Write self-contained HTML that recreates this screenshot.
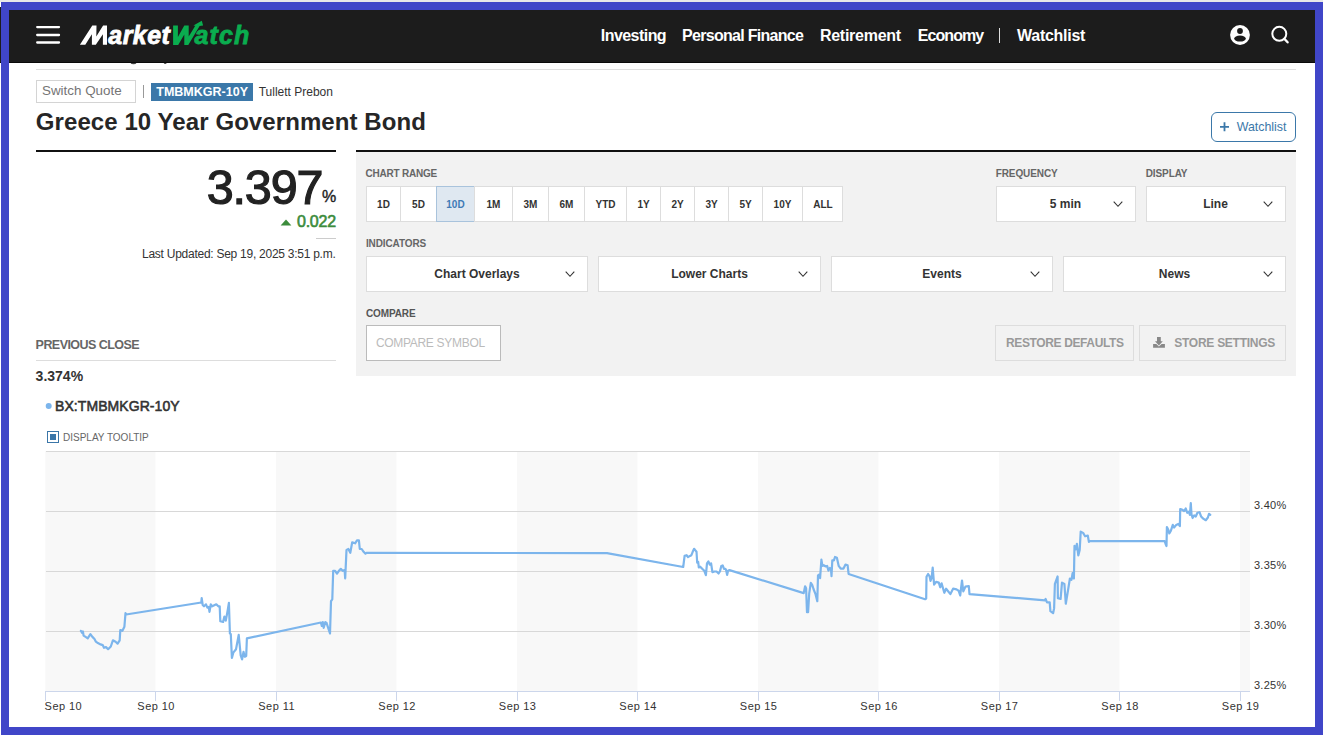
<!DOCTYPE html>
<html><head><meta charset="utf-8"><style>
html,body{margin:0;padding:0;}
body{width:1323px;height:737px;position:relative;overflow:hidden;background:#fff;font-family:"Liberation Sans", sans-serif;}
.t{position:absolute;white-space:nowrap;}
.r{position:absolute;}
</style></head><body>
<div class="r" style="left:0px;top:0px;width:1323px;height:2px;background:#e8e8e8"></div>
<div class="r" style="left:0px;top:7px;width:1323px;height:55px;background:#1c1c1c"></div>
<div class="r" style="left:0px;top:62px;width:1323px;height:1px;background:#0a0a0a"></div>
<svg class="r" style="left:30px;top:20px" width="36" height="30" viewBox="30 20 36 30"><g stroke="#fff" stroke-width="2.3" stroke-linecap="round"><line x1="37.2" y1="27.1" x2="59" y2="27.1"/><line x1="37.2" y1="35" x2="59" y2="35"/><line x1="37.2" y1="42.5" x2="59" y2="42.5"/></g></svg>
<svg class="r" style="left:76px;top:20px" width="36" height="30" viewBox="76 20 36 30"><path d="M79.9 44.7 L92.3 25.4 L96.5 25.4 L96.3 36.6 L103.1 25.4 L107 25.4 L107 44.7 L102.9 44.7 L102.9 34.2 L95.8 44.7 L91.9 44.7 L91.9 34.2 L85.3 44.7 Z" fill="#fff"/></svg>
<div class="t" style="left:108.3px;top:15px;font-size:25px;line-height:40px;font-weight:bold;font-style:italic;color:#fff;letter-spacing:0.45px;-webkit-text-stroke:0.8px #fff">arket</div>
<div class="t" style="left:194.6px;top:15px;font-size:25px;line-height:40px;font-weight:bold;font-style:italic;color:#0aad4f;letter-spacing:1.05px;-webkit-text-stroke:0.8px #0aad4f">atch</div>
<svg class="r" style="left:170px;top:18px" width="36" height="30" viewBox="170 18 36 30"><path d="M173.1 25.5 L177.9 25.5 L177.9 36.9 L184.3 25.5 L188.7 25.5 L188.7 36.5 L195.3 25.8 L193.4 25.4 L201.8 20.8 L203.1 25.5 L199.6 26 L188.3 44.9 L184.3 44.9 L184.3 34.4 L178.2 44.9 L173.1 44.9 Z" fill="#0aad4f"/></svg>
<div class="t" style="left:600.80px;top:27.65px;font-size:16px;line-height:16px;font-weight:bold;color:#fff;letter-spacing:-0.55px;font-style:normal;">Investing</div>
<div class="t" style="left:682.10px;top:27.65px;font-size:16px;line-height:16px;font-weight:bold;color:#fff;letter-spacing:-0.72px;font-style:normal;">Personal Finance</div>
<div class="t" style="left:819.90px;top:27.65px;font-size:16px;line-height:16px;font-weight:bold;color:#fff;letter-spacing:-0.26px;font-style:normal;">Retirement</div>
<div class="t" style="left:917.80px;top:27.65px;font-size:16px;line-height:16px;font-weight:bold;color:#fff;letter-spacing:-0.94px;font-style:normal;">Economy</div>
<div class="r" style="left:999px;top:28px;width:1px;height:15px;background:#ddd"></div>
<div class="t" style="left:1017.10px;top:27.65px;font-size:16px;line-height:16px;font-weight:bold;color:#fff;letter-spacing:-0.28px;font-style:normal;">Watchlist</div>
<svg class="r" style="left:1220px;top:15px" width="80" height="40" viewBox="1220 15 80 40">
<circle cx="1240" cy="35" r="9.9" fill="#fff"/>
<circle cx="1240" cy="31" r="2.9" fill="#1c1c1c"/>
<ellipse cx="1240" cy="38.6" rx="5.8" ry="3" fill="#1c1c1c"/>
<circle cx="1279.3" cy="33.8" r="7" fill="none" stroke="#fff" stroke-width="2"/>
<line x1="1284.3" y1="38.8" x2="1287.6" y2="42.3" stroke="#fff" stroke-width="2.4" stroke-linecap="round"/>
</svg>
<svg class="r" style="left:125px;top:63px" width="50" height="5" viewBox="125 63 50 5"><ellipse cx="133.5" cy="62.6" rx="3" ry="1.6" fill="#444"/><ellipse cx="165.2" cy="62.6" rx="1.5" ry="1.5" fill="#444"/></svg>
<div class="r" style="left:36px;top:69px;width:1260px;height:1px;background:#e0e0e0"></div>
<div class="r" style="left:36px;top:80px;width:100px;height:23px;border:1px solid #d4d4d4;box-sizing:border-box;background:#fff"></div>
<div class="t" style="left:42.00px;top:84.45px;font-size:13.4px;line-height:13.4px;font-weight:normal;color:#757575;letter-spacing:0px;font-style:normal;">Switch Quote</div>
<div class="r" style="left:143px;top:85px;width:1px;height:13px;background:#999"></div>
<div class="r" style="left:151px;top:83px;width:102px;height:18px;background:#3b78a9"></div>
<div class="t" style="left:156.30px;top:86.22px;font-size:12.5px;line-height:12.5px;font-weight:bold;color:#fff;letter-spacing:0px;font-style:normal;">TMBMKGR-10Y</div>
<div class="t" style="left:258.70px;top:85.84px;font-size:12px;line-height:12px;font-weight:normal;color:#333;letter-spacing:0px;font-style:normal;">Tullett Prebon</div>
<div class="t" style="left:35.80px;top:109.68px;font-size:24px;line-height:24px;font-weight:bold;color:#262626;letter-spacing:0.08px;font-style:normal;">Greece 10 Year Government Bond</div>
<div class="r" style="left:1211px;top:112px;width:85px;height:30px;border:1.5px solid #3b78a9;border-radius:6px;box-sizing:border-box"></div>
<svg class="r" style="left:1218px;top:120px" width="14" height="14" viewBox="1218 120 14 14"><path d="M1220 126.8 H1229 M1224.5 122.3 V131.3" stroke="#3b78a9" stroke-width="1.8"/></svg>
<div class="t" style="left:1236.70px;top:121.10px;font-size:12.4px;line-height:12.4px;font-weight:normal;color:#3b78a9;letter-spacing:0px;font-style:normal;">Watchlist</div>
<div class="r" style="left:36px;top:150px;width:300px;height:2px;background:#111"></div>
<div class="r" style="left:356px;top:150px;width:940px;height:2px;background:#111"></div>
<div class="r" style="left:356px;top:152px;width:940px;height:224px;background:#f2f2f2"></div>
<div class="t" style="right:1000.50px;top:162.94px;font-size:48.5px;line-height:48.5px;font-weight:normal;color:#222;letter-spacing:-1.1px;font-style:normal;-webkit-text-stroke:1.2px #222">3.397</div>
<div class="t" style="right:986.80px;top:188.95px;font-size:16px;line-height:16px;font-weight:normal;color:#222;letter-spacing:0px;font-style:normal;-webkit-text-stroke:0.4px #222">%</div>
<svg class="r" style="left:280px;top:218px" width="13" height="9" viewBox="280 218 13 9"><path d="M280.6 225.6 L286 219.4 L291.4 225.6 Z" fill="#3c8c3c"/></svg>
<div class="t" style="right:987.20px;top:214.45px;font-size:16px;line-height:16px;font-weight:normal;color:#3c8c3c;letter-spacing:-0.25px;font-style:normal;-webkit-text-stroke:0.6px #3c8c3c">0.022</div>
<div class="r" style="left:316px;top:238px;width:20px;height:1px;background:#ccc"></div>
<div class="t" style="right:987.50px;top:247.84px;font-size:12px;line-height:12px;font-weight:normal;color:#333;letter-spacing:-0.26px;font-style:normal;">Last Updated: Sep 19, 2025 3:51 p.m.</div>
<div class="t" style="left:35.60px;top:338.62px;font-size:12.5px;line-height:12.5px;font-weight:bold;color:#666;letter-spacing:-0.55px;font-style:normal;">PREVIOUS CLOSE</div>
<div class="r" style="left:36px;top:360px;width:300px;height:1px;background:#ddd"></div>
<div class="t" style="left:35.60px;top:369.25px;font-size:14px;line-height:14px;font-weight:bold;color:#333;letter-spacing:0px;font-style:normal;">3.374%</div>
<svg class="r" style="left:44px;top:401px" width="10" height="10" viewBox="44 401 10 10"><circle cx="48.7" cy="406" r="3" fill="#7cb5ec"/></svg>
<div class="t" style="left:55.00px;top:399.05px;font-size:14px;line-height:14px;font-weight:normal;color:#333;letter-spacing:0.07px;font-style:normal;-webkit-text-stroke:0.55px #333">BX:TMBMKGR-10Y</div>
<div class="r" style="left:47px;top:431px;width:12px;height:12px;border:1px solid #3a76a8;box-sizing:border-box"></div>
<div class="r" style="left:50px;top:434px;width:6px;height:6px;background:#3a76a8"></div>
<div class="t" style="left:63.00px;top:432.63px;font-size:10px;line-height:10px;font-weight:normal;color:#666;letter-spacing:0px;font-style:normal;">DISPLAY TOOLTIP</div>
<div class="t" style="left:365.40px;top:168.73px;font-size:10px;line-height:10px;font-weight:bold;color:#666;letter-spacing:-0.2px;font-style:normal;">CHART RANGE</div>
<div class="r" style="left:366px;top:186px;width:477px;height:36px;background:#fff;border:1px solid #ddd;box-sizing:border-box"></div>
<div class="t" style="left:83.50px;width:600px;text-align:center;top:199.83px;font-size:10px;line-height:10px;font-weight:bold;color:#333;letter-spacing:0px;font-style:normal;">1D</div>
<div class="r" style="left:400px;top:186px;width:1px;height:36px;background:#ddd"></div>
<div class="t" style="left:118.50px;width:600px;text-align:center;top:199.83px;font-size:10px;line-height:10px;font-weight:bold;color:#333;letter-spacing:0px;font-style:normal;">5D</div>
<div class="r" style="left:436px;top:186px;width:1px;height:36px;background:#ddd"></div>
<div class="r" style="left:436px;top:186px;width:39px;height:36px;background:#dfe8f1;border:1px solid #a9c3dc;box-sizing:border-box"></div>
<div class="t" style="left:155.50px;width:600px;text-align:center;top:199.83px;font-size:10px;line-height:10px;font-weight:bold;color:#3f7bb6;letter-spacing:0px;font-style:normal;">10D</div>
<div class="r" style="left:474px;top:186px;width:1px;height:36px;background:#ddd"></div>
<div class="t" style="left:193.50px;width:600px;text-align:center;top:199.83px;font-size:10px;line-height:10px;font-weight:bold;color:#333;letter-spacing:0px;font-style:normal;">1M</div>
<div class="r" style="left:512px;top:186px;width:1px;height:36px;background:#ddd"></div>
<div class="t" style="left:230.50px;width:600px;text-align:center;top:199.83px;font-size:10px;line-height:10px;font-weight:bold;color:#333;letter-spacing:0px;font-style:normal;">3M</div>
<div class="r" style="left:548px;top:186px;width:1px;height:36px;background:#ddd"></div>
<div class="t" style="left:266.50px;width:600px;text-align:center;top:199.83px;font-size:10px;line-height:10px;font-weight:bold;color:#333;letter-spacing:0px;font-style:normal;">6M</div>
<div class="r" style="left:584px;top:186px;width:1px;height:36px;background:#ddd"></div>
<div class="t" style="left:305.50px;width:600px;text-align:center;top:199.83px;font-size:10px;line-height:10px;font-weight:bold;color:#333;letter-spacing:0px;font-style:normal;">YTD</div>
<div class="r" style="left:626px;top:186px;width:1px;height:36px;background:#ddd"></div>
<div class="t" style="left:343.50px;width:600px;text-align:center;top:199.83px;font-size:10px;line-height:10px;font-weight:bold;color:#333;letter-spacing:0px;font-style:normal;">1Y</div>
<div class="r" style="left:660px;top:186px;width:1px;height:36px;background:#ddd"></div>
<div class="t" style="left:377.50px;width:600px;text-align:center;top:199.83px;font-size:10px;line-height:10px;font-weight:bold;color:#333;letter-spacing:0px;font-style:normal;">2Y</div>
<div class="r" style="left:694px;top:186px;width:1px;height:36px;background:#ddd"></div>
<div class="t" style="left:411.50px;width:600px;text-align:center;top:199.83px;font-size:10px;line-height:10px;font-weight:bold;color:#333;letter-spacing:0px;font-style:normal;">3Y</div>
<div class="r" style="left:728px;top:186px;width:1px;height:36px;background:#ddd"></div>
<div class="t" style="left:445.50px;width:600px;text-align:center;top:199.83px;font-size:10px;line-height:10px;font-weight:bold;color:#333;letter-spacing:0px;font-style:normal;">5Y</div>
<div class="r" style="left:762px;top:186px;width:1px;height:36px;background:#ddd"></div>
<div class="t" style="left:482.50px;width:600px;text-align:center;top:199.83px;font-size:10px;line-height:10px;font-weight:bold;color:#333;letter-spacing:0px;font-style:normal;">10Y</div>
<div class="r" style="left:802px;top:186px;width:1px;height:36px;background:#ddd"></div>
<div class="t" style="left:523.00px;width:600px;text-align:center;top:199.83px;font-size:10px;line-height:10px;font-weight:bold;color:#333;letter-spacing:0px;font-style:normal;">ALL</div>
<div class="t" style="left:995.70px;top:168.83px;font-size:10px;line-height:10px;font-weight:bold;color:#666;letter-spacing:-0.1px;font-style:normal;">FREQUENCY</div>
<div class="r" style="left:996px;top:186px;width:140px;height:36px;background:#fff;border:1px solid #ddd;box-sizing:border-box"></div>
<div class="t" style="left:765.50px;width:600px;text-align:center;top:198.04px;font-size:12px;line-height:12px;font-weight:bold;color:#333;letter-spacing:0px;font-style:normal;">5 min</div>
<svg class="r" style="left:1111.5px;top:198.5px" width="12" height="10" viewBox="1111.5 198.5 12 10"><path d="M1113.2 201.2 L1117.5 205.8 L1121.8 201.2" fill="none" stroke="#333" stroke-width="1.1"/></svg>
<div class="t" style="left:1145.70px;top:168.83px;font-size:10px;line-height:10px;font-weight:bold;color:#666;letter-spacing:-0.1px;font-style:normal;">DISPLAY</div>
<div class="r" style="left:1146px;top:186px;width:140px;height:36px;background:#fff;border:1px solid #ddd;box-sizing:border-box"></div>
<div class="t" style="left:915.50px;width:600px;text-align:center;top:198.04px;font-size:12px;line-height:12px;font-weight:bold;color:#333;letter-spacing:0px;font-style:normal;">Line</div>
<svg class="r" style="left:1261.5px;top:198.5px" width="12" height="10" viewBox="1261.5 198.5 12 10"><path d="M1263.2 201.2 L1267.5 205.8 L1271.8 201.2" fill="none" stroke="#333" stroke-width="1.1"/></svg>
<div class="t" style="left:365.90px;top:238.73px;font-size:10px;line-height:10px;font-weight:bold;color:#666;letter-spacing:-0.1px;font-style:normal;">INDICATORS</div>
<div class="r" style="left:366px;top:256px;width:222px;height:36px;background:#fff;border:1px solid #ddd;box-sizing:border-box"></div>
<div class="t" style="left:177.00px;width:600px;text-align:center;top:267.84px;font-size:12px;line-height:12px;font-weight:bold;color:#333;letter-spacing:0px;font-style:normal;">Chart Overlays</div>
<svg class="r" style="left:564px;top:268.7px" width="12" height="10" viewBox="564 268.7 12 10"><path d="M565.7 271.4 L570 276.0 L574.3 271.4" fill="none" stroke="#333" stroke-width="1.1"/></svg>
<div class="r" style="left:598px;top:256px;width:223px;height:36px;background:#fff;border:1px solid #ddd;box-sizing:border-box"></div>
<div class="t" style="left:409.50px;width:600px;text-align:center;top:267.84px;font-size:12px;line-height:12px;font-weight:bold;color:#333;letter-spacing:0px;font-style:normal;">Lower Charts</div>
<svg class="r" style="left:797px;top:268.7px" width="12" height="10" viewBox="797 268.7 12 10"><path d="M798.7 271.4 L803 276.0 L807.3 271.4" fill="none" stroke="#333" stroke-width="1.1"/></svg>
<div class="r" style="left:831px;top:256px;width:222px;height:36px;background:#fff;border:1px solid #ddd;box-sizing:border-box"></div>
<div class="t" style="left:642.00px;width:600px;text-align:center;top:267.84px;font-size:12px;line-height:12px;font-weight:bold;color:#333;letter-spacing:0px;font-style:normal;">Events</div>
<svg class="r" style="left:1029px;top:268.7px" width="12" height="10" viewBox="1029 268.7 12 10"><path d="M1030.7 271.4 L1035 276.0 L1039.3 271.4" fill="none" stroke="#333" stroke-width="1.1"/></svg>
<div class="r" style="left:1063px;top:256px;width:223px;height:36px;background:#fff;border:1px solid #ddd;box-sizing:border-box"></div>
<div class="t" style="left:874.50px;width:600px;text-align:center;top:267.84px;font-size:12px;line-height:12px;font-weight:bold;color:#333;letter-spacing:0px;font-style:normal;">News</div>
<svg class="r" style="left:1262px;top:268.7px" width="12" height="10" viewBox="1262 268.7 12 10"><path d="M1263.7 271.4 L1268 276.0 L1272.3 271.4" fill="none" stroke="#333" stroke-width="1.1"/></svg>
<div class="t" style="left:365.90px;top:308.73px;font-size:10px;line-height:10px;font-weight:bold;color:#555;letter-spacing:-0.1px;font-style:normal;">COMPARE</div>
<div class="r" style="left:366px;top:325px;width:135px;height:36px;background:#fff;border:1px solid #bbb;box-sizing:border-box"></div>
<div class="t" style="left:375.90px;top:337.04px;font-size:12px;line-height:12px;font-weight:normal;color:#bbb;letter-spacing:-0.3px;font-style:normal;">COMPARE SYMBOL</div>
<div class="r" style="left:995px;top:325px;width:139px;height:36px;border:1px solid #ddd;box-sizing:border-box"></div>
<div class="t" style="left:1006.00px;top:336.94px;font-size:12px;line-height:12px;font-weight:bold;color:#999;letter-spacing:-0.375px;font-style:normal;">RESTORE DEFAULTS</div>
<div class="r" style="left:1139px;top:325px;width:147px;height:36px;border:1px solid #ddd;box-sizing:border-box"></div>
<svg class="r" style="left:1150px;top:335px" width="18" height="15" viewBox="1150 335 18 15"><path d="M1157 337.1 H1160.8 V341.2 H1162.8 L1158.9 345.6 L1155 341.2 H1157 Z" fill="#888"/><path d="M1153.1 344.1 H1156.3 L1158.9 346.6 L1161.6 344.1 H1164.9 V347.8 H1153.1 Z" fill="#888"/></svg>
<div class="t" style="left:1174.30px;top:336.94px;font-size:12px;line-height:12px;font-weight:bold;color:#999;letter-spacing:-0.27px;font-style:normal;">STORE SETTINGS</div>
<svg class="r" style="left:0;top:440px" width="1323" height="290" viewBox="0 440 1323 290"><rect x="45.3" y="451" width="110.10000000000001" height="240" fill="#f8f8f8"/><rect x="275.9" y="451" width="120.5" height="240" fill="#f8f8f8"/><rect x="516.9" y="451" width="120.5" height="240" fill="#f8f8f8"/><rect x="757.9" y="451" width="120.5" height="240" fill="#f8f8f8"/><rect x="998.9" y="451" width="120.50000000000011" height="240" fill="#f8f8f8"/><rect x="1239.9" y="451" width="10.099999999999909" height="240" fill="#f8f8f8"/><rect x="46" y="451" width="1204" height="1" fill="#d8d8d8"/><rect x="46" y="511" width="1204" height="1" fill="#d8d8d8"/><rect x="46" y="571" width="1204" height="1" fill="#d8d8d8"/><rect x="46" y="631" width="1204" height="1" fill="#d8d8d8"/><rect x="46" y="691" width="1204" height="1" fill="#ccd6eb"/><rect x="45" y="691" width="1" height="10" fill="#ccd6eb"/><rect x="155" y="691" width="1" height="10" fill="#ccd6eb"/><rect x="276" y="691" width="1" height="10" fill="#ccd6eb"/><rect x="396" y="691" width="1" height="10" fill="#ccd6eb"/><rect x="517" y="691" width="1" height="10" fill="#ccd6eb"/><rect x="637" y="691" width="1" height="10" fill="#ccd6eb"/><rect x="758" y="691" width="1" height="10" fill="#ccd6eb"/><rect x="878" y="691" width="1" height="10" fill="#ccd6eb"/><rect x="999" y="691" width="1" height="10" fill="#ccd6eb"/><rect x="1119" y="691" width="1" height="10" fill="#ccd6eb"/><rect x="1240" y="691" width="1" height="10" fill="#ccd6eb"/><path d="M80.9 630.8 L82.2 632.9 L82.9 631.5 L83.6 635.6 L85.6 636.9 L87.7 638.3 L90.4 634.2 L92.4 636.9 L94.5 639.0 L95.9 641.7 L97.9 643.1 L100.6 644.4 L102.7 645.1 L104.0 647.8 L106.0 647.1 L108.1 649.2 L110.8 646.5 L112.9 640.3 L115.6 641.7 L117.6 643.7 L119.7 640.3 L120.3 630.1 L122.4 630.8 L124.4 626.7 L125.5 613.1 L126.1 614.5 L201.3 602.5 L201.7 598.2 L202.7 605.0 L204.0 606.3 L206.0 604.3 L207.4 607.7 L208.8 607.0 L209.5 611.8 L210.8 604.3 L212.2 606.3 L216.3 604.3 L218.3 606.3 L219.7 606.3 L220.3 621.3 L223.1 622.0 L224.4 616.5 L225.8 620.6 L227.8 609.7 L228.9 602.9 L229.9 633.5 L230.8 634.2 L231.9 658.0 L233.3 652.6 L236.0 649.2 L238.7 634.9 L240.7 655.3 L242.1 659.4 L243.5 651.9 L244.8 656.7 L246.2 656.0 L246.9 638.3 L320.9 622.5 L321.8 625.9 L322.8 622.1 L323.7 627.8 L325.3 622.1 L326.6 623.0 L327.5 625.9 L330.0 633.5 L331.0 601.2 L332.3 599.3 L333.2 570.8 L335.1 570.8 L337.0 573.7 L338.9 570.8 L340.8 568.9 L342.7 570.8 L344.6 569.9 L345.2 578.4 L346.5 549.9 L348.4 549.0 L350.3 552.8 L352.2 542.3 L355.1 543.3 L357.0 540.4 L358.9 540.4 L359.8 549.0 L361.7 549.0 L363.6 551.8 L365.5 553.7 L366.5 552.8 L607.0 553.1 L683.2 567.0 L684.6 555.9 L686.6 555.2 L688.0 557.2 L690.0 555.9 L691.4 555.2 L692.7 551.8 L694.1 548.8 L695.4 550.4 L696.5 551.8 L697.2 562.7 L698.2 562.0 L698.8 567.4 L700.2 566.7 L702.2 568.8 L704.3 570.8 L705.9 575.2 L707.0 563.3 L708.4 561.3 L709.7 564.7 L711.1 563.3 L712.4 572.2 L714.5 571.5 L716.5 571.5 L718.6 573.5 L719.9 571.5 L721.3 566.1 L722.7 565.4 L724.0 568.8 L725.4 568.8 L726.1 570.1 L727.1 574.9 L728.1 570.8 L729.5 570.1 L803.7 593.1 L805.1 586.3 L806.1 588.3 L807.0 612.1 L808.1 612.1 L809.2 593.7 L810.8 582.9 L812.2 584.9 L813.5 589.0 L815.6 594.4 L817.3 601.2 L818.0 575.4 L819.0 574.7 L820.1 578.1 L821.4 559.7 L822.4 565.9 L823.7 565.2 L825.8 566.5 L827.1 565.9 L828.5 570.6 L829.9 567.9 L831.0 569.3 L831.5 576.1 L832.3 560.4 L833.9 560.4 L835.0 557.0 L836.9 557.7 L838.7 565.9 L840.7 568.6 L843.5 568.6 L845.5 564.5 L847.6 565.2 L848.6 574.0 L925.1 599.2 L926.2 598.5 L926.5 576.7 L928.1 574.0 L929.5 576.1 L930.5 580.8 L931.6 578.1 L932.7 567.6 L934.1 584.6 L936.1 581.9 L938.8 582.6 L940.2 587.3 L941.6 583.3 L944.3 592.8 L946.1 588.7 L947.7 590.7 L950.4 594.1 L953.1 588.7 L956.5 589.4 L958.6 590.7 L960.2 595.5 L962.0 580.5 L963.3 591.4 L965.4 586.7 L968.8 586.0 L969.5 594.1 L1045.0 600.3 L1045.6 598.9 L1047.0 602.3 L1049.7 602.3 L1050.4 611.2 L1053.1 613.2 L1054.1 608.4 L1054.9 583.9 L1057.6 576.5 L1057.9 598.2 L1060.6 598.9 L1062.0 582.6 L1064.4 584.0 L1065.8 603.7 L1067.4 594.1 L1069.9 578.5 L1071.5 579.9 L1072.6 573.1 L1073.9 578.5 L1074.5 545.9 L1075.9 549.3 L1076.9 543.8 L1078.3 555.4 L1079.7 549.9 L1080.7 531.6 L1083.1 532.9 L1085.1 536.3 L1087.8 535.6 L1088.9 541.8 L1089.9 541.1 L1164.6 541.1 L1165.6 544.0 L1166.5 546.1 L1166.9 527.0 L1168.3 529.7 L1169.3 533.4 L1170.9 530.7 L1172.8 524.9 L1174.1 527.6 L1176.2 524.9 L1178.3 523.9 L1179.9 526.0 L1180.2 509.0 L1182.0 509.6 L1184.1 511.2 L1185.7 508.5 L1187.3 512.8 L1188.9 511.7 L1189.9 514.9 L1190.8 503.2 L1191.5 514.3 L1192.6 518.0 L1194.2 515.4 L1195.8 516.5 L1197.4 512.8 L1199.5 512.2 L1201.1 516.5 L1203.2 518.6 L1205.8 520.2 L1207.9 517.5 L1209.0 513.8 L1210.3 514.9" fill="none" stroke="#7cb5ec" stroke-width="2.2" stroke-linejoin="round" stroke-linecap="round"/></svg>
<div class="t" style="left:44.60px;top:700.59px;font-size:11px;line-height:11px;font-weight:normal;color:#333;letter-spacing:0.45px;font-style:normal;">Sep 10</div>
<div class="t" style="left:-143.85px;width:600px;text-align:center;top:700.59px;font-size:11px;line-height:11px;font-weight:normal;color:#333;letter-spacing:0.45px;font-style:normal;">Sep 10</div>
<div class="t" style="left:-23.35px;width:600px;text-align:center;top:700.59px;font-size:11px;line-height:11px;font-weight:normal;color:#333;letter-spacing:0.45px;font-style:normal;">Sep 11</div>
<div class="t" style="left:97.15px;width:600px;text-align:center;top:700.59px;font-size:11px;line-height:11px;font-weight:normal;color:#333;letter-spacing:0.45px;font-style:normal;">Sep 12</div>
<div class="t" style="left:217.65px;width:600px;text-align:center;top:700.59px;font-size:11px;line-height:11px;font-weight:normal;color:#333;letter-spacing:0.45px;font-style:normal;">Sep 13</div>
<div class="t" style="left:338.15px;width:600px;text-align:center;top:700.59px;font-size:11px;line-height:11px;font-weight:normal;color:#333;letter-spacing:0.45px;font-style:normal;">Sep 14</div>
<div class="t" style="left:458.65px;width:600px;text-align:center;top:700.59px;font-size:11px;line-height:11px;font-weight:normal;color:#333;letter-spacing:0.45px;font-style:normal;">Sep 15</div>
<div class="t" style="left:579.15px;width:600px;text-align:center;top:700.59px;font-size:11px;line-height:11px;font-weight:normal;color:#333;letter-spacing:0.45px;font-style:normal;">Sep 16</div>
<div class="t" style="left:699.65px;width:600px;text-align:center;top:700.59px;font-size:11px;line-height:11px;font-weight:normal;color:#333;letter-spacing:0.45px;font-style:normal;">Sep 17</div>
<div class="t" style="left:820.15px;width:600px;text-align:center;top:700.59px;font-size:11px;line-height:11px;font-weight:normal;color:#333;letter-spacing:0.45px;font-style:normal;">Sep 18</div>
<div class="t" style="left:940.65px;width:600px;text-align:center;top:700.59px;font-size:11px;line-height:11px;font-weight:normal;color:#333;letter-spacing:0.45px;font-style:normal;">Sep 19</div>
<div class="t" style="left:1254.00px;top:500.19px;font-size:11px;line-height:11px;font-weight:normal;color:#333;letter-spacing:0.25px;font-style:normal;">3.40%</div>
<div class="t" style="left:1254.00px;top:560.19px;font-size:11px;line-height:11px;font-weight:normal;color:#333;letter-spacing:0.25px;font-style:normal;">3.35%</div>
<div class="t" style="left:1254.00px;top:620.19px;font-size:11px;line-height:11px;font-weight:normal;color:#333;letter-spacing:0.25px;font-style:normal;">3.30%</div>
<div class="t" style="left:1254.00px;top:680.19px;font-size:11px;line-height:11px;font-weight:normal;color:#333;letter-spacing:0.25px;font-style:normal;">3.25%</div>
<div class="r" style="left:1px;top:2px;width:1322px;height:733px;border:8px solid #4046c8;box-sizing:border-box"></div>
<div class="r" style="left:0px;top:735px;width:1323px;height:2px;background:#fff"></div>
</body></html>
